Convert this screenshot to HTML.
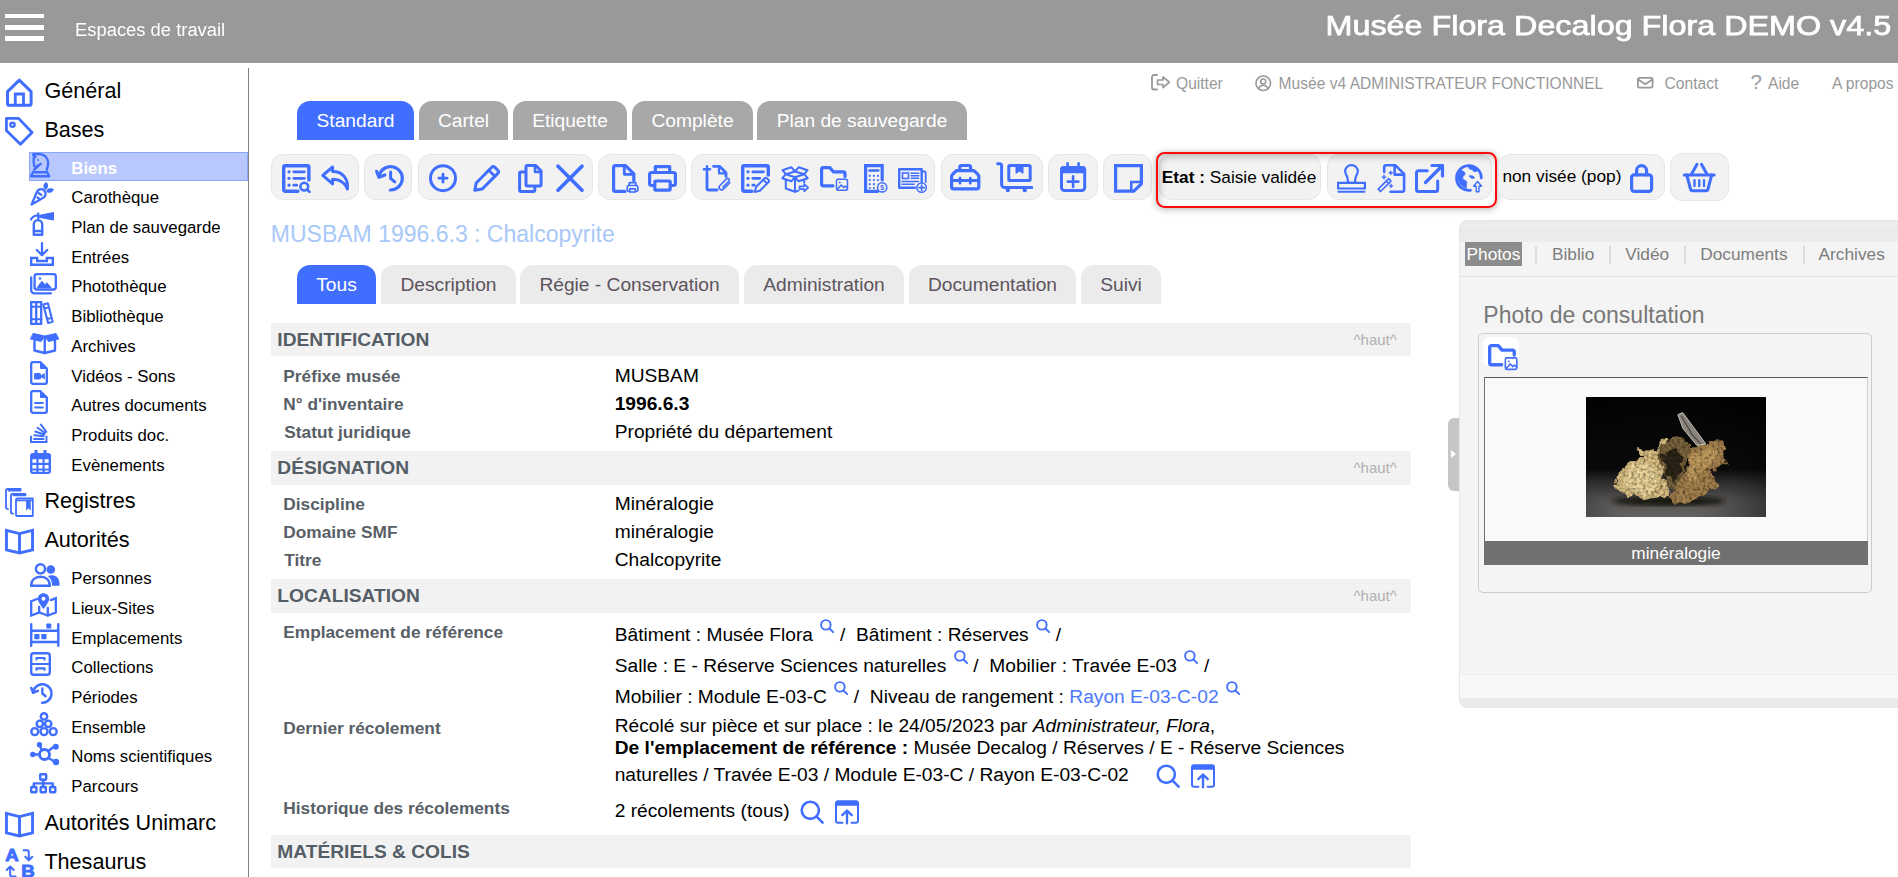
<!DOCTYPE html>
<html lang="fr"><head><meta charset="utf-8"><title>Musée Flora</title>
<style>
html,body{margin:0;padding:0;background:#fff}
body{width:1898px;height:877px;overflow:hidden;position:relative;font-family:"Liberation Sans",sans-serif;color:#000}
.t{position:absolute;white-space:nowrap;line-height:1}
.b{position:absolute}
.i{position:absolute;color:#406eff;overflow:visible}
.tab{position:absolute;border-radius:13px 13px 0 0;font-size:19.2px;text-align:center;line-height:39px;white-space:nowrap}
.tab span{position:relative;top:-0.5px}
.sm{width:14px;height:14px;color:#406eff;position:relative;top:-8.500px;margin:0 5.600px 0 2px;overflow:visible}
</style></head>
<body>
<header>
<div class="b" style="left:0px;top:0px;width:1898px;height:62.5px;background:#999"></div>
<div class="b" style="left:4.5px;top:13.7px;width:39px;height:4.5px;background:#fff"></div>
<div class="b" style="left:4.5px;top:25px;width:39px;height:4.5px;background:#fff"></div>
<div class="b" style="left:4.5px;top:36.2px;width:39px;height:4.5px;background:#fff"></div>
<span class="t " style="left:74.5px;top:19px;font-size:19.2px;line-height:21px;color:#fff;transform:scaleX(0.958);transform-origin:0 50%;">Espaces de travail</span>
<span class="t " style="right:7.2px;top:10px;font-size:28px;line-height:31px;color:#fff;-webkit-text-stroke:0.75px #fff;transform:scaleX(1.154);transform-origin:100% 50%;">Musée Flora Decalog Flora DEMO v4.5</span>
</header>
<nav>
<div class="b" style="left:248px;top:68px;width:1px;height:809px;background:#808080"></div>
<svg class="i" style="left:6px;top:78px;width:26.60px;height:28.80px;" viewBox="0 0 26.6 28.8"><g fill="none" stroke="currentColor" stroke-width="3" stroke-linecap="round" stroke-linejoin="round"><path d="M1.500 13.600 13.300 2.200l11.800 11.400v12.200a1.500 1.500 0 0 1-1.500 1.500H3a1.500 1.500 0 0 1-1.500-1.500z" /><path d="M9.300 27V16h8.200v11" stroke-width="2.800" stroke-linejoin="miter"/></g></svg>
<span class="t " style="left:44.4px;top:78px;font-size:21.6px;line-height:25px;">Général</span>
<svg class="i" style="left:4.9px;top:116.8px;width:29.10px;height:29.20px;" viewBox="0 0 29.1 29.2"><g fill="none" stroke="currentColor" stroke-width="2.8" stroke-linecap="round" stroke-linejoin="round"><path d="M1.400 1.400h12.200l13.500 14.100-11.700 11.700L1.400 13.600z" stroke-linejoin="round"/><circle cx="7.500" cy="7.700" r="2.100" stroke-width="2.400"/></g></svg>
<span class="t " style="left:44.4px;top:117px;font-size:21.6px;line-height:25px;">Bases</span>
<svg class="i" style="left:5.3px;top:488px;width:28.80px;height:29.00px;" viewBox="0 0 28.8 29"><g fill="none" stroke="currentColor" stroke-width="1.8" stroke-linecap="round" stroke-linejoin="round"><path d="M1 19.500V2.600A1.600 1.600 0 0 1 2.600 1h13v1.500H3.500M1 19.500c0 1 .8 1.700 2 1.700" /><path d="M6 24V7.400a1.600 1.600 0 0 1 1.600-1.600h12.800v1.500H8.500M6 24c0 1 .8 1.700 2 1.700"/><path d="M11 27V11.800a1.500 1.500 0 0 1 1.500-1.500h15.300v17.700H12.200A1.200 1.200 0 0 1 11 27z"/><path d="M11.500 12.300h16"/><path d="M21.500 12.500v9.300l1.900-1.700 1.900 1.700v-9.300z" fill="currentColor" stroke-width=".8"/></g></svg>
<span class="t " style="left:44.4px;top:488px;font-size:21.6px;line-height:25px;">Registres</span>
<svg class="i" style="left:5px;top:528px;width:29.00px;height:26.40px;" viewBox="0 0 29 26.4"><g fill="none" stroke="currentColor" stroke-width="2.9" stroke-linecap="round" stroke-linejoin="miter"><path d="M1.450 2.300 14.500 5.600l13.050-3.300V21.800L14.500 25 1.450 21.800zM14.500 5.600V25"/></g></svg>
<span class="t " style="left:44.4px;top:527px;font-size:21.6px;line-height:25px;">Autorités</span>
<svg class="i" style="left:5px;top:811px;width:29.00px;height:26.40px;" viewBox="0 0 29 26.4"><g fill="none" stroke="currentColor" stroke-width="2.9" stroke-linecap="round" stroke-linejoin="miter"><path d="M1.450 2.300 14.500 5.600l13.050-3.300V21.800L14.500 25 1.450 21.800zM14.500 5.600V25"/></g></svg>
<span class="t " style="left:44.4px;top:810px;font-size:21.6px;line-height:25px;">Autorités Unimarc</span>
<svg class="i" style="left:5px;top:848px;width:29.00px;height:29.00px;" viewBox="0 0 29 29"><text transform="scale(1.1 1)" x="0.200" y="12.800" font-family="Liberation Sans, sans-serif" font-weight="bold" font-size="17" fill="currentColor" stroke="currentColor" stroke-width=".9">A</text><text transform="scale(1.1 1)" x="14.800" y="29.500" font-family="Liberation Sans, sans-serif" font-weight="bold" font-size="17" fill="currentColor" stroke="currentColor" stroke-width=".9">B</text><g fill="none" stroke="currentColor" stroke-width="2" stroke-linecap="round" stroke-linejoin="round"><path d="M18.500 2.300h3.300a2 2 0 0 1 2 2v7.500M20.300 8.800l3.500 3.500 3.500-3.500"/><path d="M10.500 28.500H7.200a2 2 0 0 1-2-2V19M1.700 22l3.500-3.500L8.700 22"/></g></svg>
<span class="t " style="left:44.4px;top:849px;font-size:21.6px;line-height:25px;">Thesaurus</span>
<div class="b" style="left:29px;top:152px;width:219px;height:28.6px;background:#b8c8fc;border:1px solid #8aa5fc;box-sizing:border-box"></div>
<svg class="i" style="left:30.2px;top:152.2px;width:20.80px;height:26.00px;" viewBox="0 0 20 25"><g fill="none" stroke="currentColor" stroke-width="2.3" stroke-linecap="round" stroke-linejoin="round"><path d="M3.500 2h5.500c5 0 8.500 4 8.500 8.500 0 2.500-.9 4.200-1.300 6.500"/><path d="M3 2.500c.8.800 1.600 1.500 2.300 2.300M4 3c-.8 3.500-.7 7 0 10.500l1.500 1 4.800-3M4 17l6.300-5.500"/><circle cx="7.800" cy="7.700" r=".9" fill="currentColor" stroke="none"/><path d="M2.800 19.500h13.800l1.800 3.800H1z"/></g></svg>
<span class="t " style="left:71.3px;top:159px;font-size:16.8px;line-height:19px;color:#fff;font-weight:bold;">Biens</span>
<svg class="i" style="left:30.2px;top:181.7px;width:24.00px;height:24.00px;" viewBox="0 0 24 24"><g fill="none" stroke="currentColor" stroke-width="2.3" stroke-linecap="round" stroke-linejoin="round"><path d="M1.600 22.400 7 9.800c1.200-2.500 4-3.300 6.300-2 2.300 1.400 3 4.200 1.500 6.500-.8 1.200-2 1.900-3.300 2.500z"/><path d="M8.800 11.200l2.500 1.700M7.500 15.500l1.700 1.200"/><path d="M14.800 6.500c-1-2.200-.2-4.500 1.500-5.500 1.300 1.700 1.200 4-.3 5.800M17.200 8.800c1.200-1.700 3.800-2.300 5.800-1.300-.8 2-3.200 3-5.300 2.300" fill="currentColor" stroke-width="1.600"/></g></svg>
<span class="t " style="left:71.3px;top:188px;font-size:16.8px;line-height:19px;">Carothèque</span>
<svg class="i" style="left:30.2px;top:211.8px;width:24.00px;height:24.00px;" viewBox="0 0 24 24"><g fill="none" stroke="currentColor" stroke-width="2.4" stroke-linecap="round" stroke-linejoin="round"><path d="M3.800 22.800V12.300a4.200 4.200 0 0 1 8.400 0v10.500z"/><path d="M4 19h8"/><path d="M8.200 8V1.200" stroke-width="2"/><path d="M1 7.500c1-2.500 3.500-4 7-4.200" stroke-width="2.200"/><path d="M8.500 3.500 23.500.500v7.500L8.500 5.200z" fill="currentColor" stroke-width="1"/></g></svg>
<span class="t " style="left:71.3px;top:218px;font-size:16.8px;line-height:19px;">Plan de sauvegarde</span>
<svg class="i" style="left:30.2px;top:242.1px;width:24.00px;height:24.00px;" viewBox="0 0 24 24"><g fill="none" stroke="currentColor" stroke-width="2.4" stroke-linecap="round" stroke-linejoin="round"><path d="M12 1.200v11.500M6.800 8 12 13.200 17.200 8" stroke-width="2.300"/><path d="M1.200 16h6v3h9.600v-3h6v6.700H1.200z" stroke-linejoin="miter"/></g></svg>
<span class="t " style="left:71.3px;top:248px;font-size:16.8px;line-height:19px;">Entrées</span>
<svg class="i" style="left:30.2px;top:272.7px;width:27.00px;height:21.50px;" viewBox="0 0 27 21.5"><g fill="none" stroke="currentColor" stroke-width="2.3" stroke-linecap="round" stroke-linejoin="round"><rect x="4.600" y="1.200" width="21.200" height="15.300" rx="2.300"/><path d="M1.200 4.500v12.800a3 3 0 0 0 3 3H21"/><circle cx="10" cy="5.500" r="1.300" fill="currentColor" stroke="none"/><path d="M7.500 14.200l4.500-6 3 3.800 1.800-2.200 4 4.400z" fill="currentColor" stroke-width="1"/></g></svg>
<span class="t " style="left:71.3px;top:277px;font-size:16.8px;line-height:19px;">Photothèque</span>
<svg class="i" style="left:30.2px;top:301.1px;width:24.00px;height:24.00px;" viewBox="0 0 24 24"><g fill="none" stroke="currentColor" stroke-width="2.3" stroke-linecap="round" stroke-linejoin="round"><path d="M1.200 1.200h5v21.600h-5zM6.200 1.200h5v21.600h-5z" stroke-linejoin="miter"/><path d="M1.200 5.800h10M1.200 18.200h10" stroke-width="2"/><path d="M13.300 3.500l4.600-1.300 4.800 18.500-4.600 1.300zM14.300 7.500l4.600-1.300M17 18l4.600-1.300" stroke-width="2.100"/></g></svg>
<span class="t " style="left:71.3px;top:307px;font-size:16.8px;line-height:19px;">Bibliothèque</span>
<svg class="i" style="left:30.2px;top:332px;width:29.50px;height:22.00px;" viewBox="0 0 29.5 22"><g fill="none" stroke="currentColor" stroke-width="2.4" stroke-linecap="round" stroke-linejoin="round"><path d="M4.500 9v9.500l10.250 2.500 10.250-2.500V9"/><path d="M14.750 6v15"/><path d="M3.500 1.500 14.750 4 26 1.500l2.800 5.500-10.300 2.500-3.750-5-3.750 5L.7 7z" fill="currentColor" stroke-width="1"/></g></svg>
<span class="t " style="left:71.3px;top:337px;font-size:16.8px;line-height:19px;">Archives</span>
<svg class="i" style="left:30.2px;top:360.8px;width:18.00px;height:24.00px;" viewBox="0 0 18 24"><g fill="none" stroke="currentColor" stroke-width="2.3" stroke-linecap="round" stroke-linejoin="round"><path d="M3 1.200h7.500l6.300 6.300V21a1.800 1.800 0 0 1-1.800 1.800H3A1.800 1.800 0 0 1 1.200 21V3A1.800 1.800 0 0 1 3 1.200z"/><path d="M10.500 1.500v6h6" fill="currentColor" stroke-width="1"/><rect x="4" y="12" width="7" height="6.500" rx="1.500" fill="currentColor" stroke="none"/><path d="M11 14.500l3.500-2v5.500l-3.500-2z" fill="currentColor" stroke-width=".5"/></g></svg>
<span class="t " style="left:71.3px;top:367px;font-size:16.8px;line-height:19px;">Vidéos - Sons</span>
<svg class="i" style="left:30.2px;top:390.4px;width:18.00px;height:24.00px;" viewBox="0 0 18 24"><g fill="none" stroke="currentColor" stroke-width="2.3" stroke-linecap="round" stroke-linejoin="round"><path d="M3 1.200h7.500l6.300 6.300V21a1.800 1.800 0 0 1-1.800 1.800H3A1.800 1.800 0 0 1 1.200 21V3A1.800 1.800 0 0 1 3 1.200z"/><path d="M10.500 1.500v6h6" fill="currentColor" stroke-width="1"/><path d="M5.200 13h7.600M5.200 17.500h7.600" stroke-width="2.200"/></g></svg>
<span class="t " style="left:71.3px;top:396px;font-size:16.8px;line-height:19px;">Autres documents</span>
<svg class="i" style="left:30.2px;top:421.70000000000005px;width:17.50px;height:21.00px;" viewBox="0 0 17.5 21"><g fill="none" stroke="currentColor" stroke-width="1.9" stroke-linecap="round" stroke-linejoin="round"><path d="M1 14.500V20h15.500v-5.500" stroke-linejoin="miter"/><path d="M4 17h9.500M4.300 13.300l9.300 1M5.300 9.500l8.800 3M7.500 5.800l7.500 5.200M10.800 2.500l5.500 7.300" stroke-width="2"/></g></svg>
<span class="t " style="left:71.3px;top:426px;font-size:16.8px;line-height:19px;">Produits doc.</span>
<svg class="i" style="left:30.2px;top:450.1px;width:21.00px;height:24.00px;" viewBox="0 0 21 24"><path fill="currentColor" d="M4.500 0h3v3h6V0h3v3H18a3 3 0 0 1 3 3v15a3 3 0 0 1-3 3H3a3 3 0 0 1-3-3V6a3 3 0 0 1 3-3h1.500z"/><g fill="#fff"><rect x="2.400" y="9.200" width="4" height="3.600"/><rect x="8.500" y="9.200" width="4" height="3.600"/><rect x="14.600" y="9.200" width="4" height="3.600"/><rect x="2.400" y="15" width="4" height="3.600"/><rect x="8.500" y="15" width="4" height="3.600"/><rect x="14.600" y="15" width="4" height="3.600"/><rect x="2.400" y="20.500" width="4" height="1.300"/><rect x="8.500" y="20.500" width="4" height="1.300"/><rect x="14.600" y="20.500" width="4" height="1.300"/></g></svg>
<span class="t " style="left:71.3px;top:456px;font-size:16.8px;line-height:19px;">Evènements</span>
<svg class="i" style="left:30.2px;top:563.3px;width:29.50px;height:24.00px;" viewBox="0 0 29.5 24"><g fill="none" stroke="currentColor" stroke-width="2.4" stroke-linecap="round" stroke-linejoin="round"><circle cx="10.500" cy="5.800" r="4.600"/><path d="M1.200 22.700c0-5.500 3.800-9 9.300-9s9.300 3.500 9.300 9z" stroke-linejoin="miter"/><circle cx="20.800" cy="6.500" r="4.300" fill="currentColor" stroke="none"/><path d="M19.500 12.600c1-.3 1.700-.4 2.700-.4 4.300 0 7.300 3.500 7.300 8.500v2h-7.400c0-4-1-7.300-4-9.300.4-.4.900-.6 1.400-.8z" fill="currentColor" stroke="none"/></g></svg>
<span class="t " style="left:71.3px;top:569px;font-size:16.8px;line-height:19px;">Personnes</span>
<svg class="i" style="left:30.2px;top:593px;width:27.00px;height:24.00px;" viewBox="0 0 27 24"><g fill="none" stroke="currentColor" stroke-width="2.3" stroke-linecap="round" stroke-linejoin="round"><path d="M7 6 1.200 8.200v14.300l8-3 8.600 3 8-3V5.200l-5 1.900" stroke-linejoin="miter"/><path d="M9.200 14v5.500M17.800 15v7.500"/><path d="M13.500.3c-3.300 0-5.700 2.400-5.700 5.500 0 3.700 5.700 10.200 5.700 10.200s5.700-6.500 5.700-10.200c0-3.100-2.400-5.500-5.700-5.500z" fill="currentColor" stroke="none"/><circle cx="13.500" cy="5.800" r="2" fill="#fff" stroke="none"/></g></svg>
<span class="t " style="left:71.3px;top:599px;font-size:16.8px;line-height:19px;">Lieux-Sites</span>
<svg class="i" style="left:30.2px;top:623px;width:29.50px;height:24.00px;" viewBox="0 0 29.5 24"><g fill="none" stroke="currentColor" stroke-width="2.4" stroke-linecap="round" stroke-linejoin="round"><path d="M1.200 1.200v21.600M28.300 1.200v21.600M1.200 7.800h27M1.200 19h27" stroke-width="2.400"/><rect x="16.300" y="0.500" width="5" height="5" rx=".8" fill="currentColor" stroke="none"/><rect x="4.300" y="11" width="5.200" height="5.200" rx=".8" fill="currentColor" stroke="none"/><rect x="11.300" y="11" width="5.200" height="5.200" rx=".8" fill="currentColor" stroke="none"/></g></svg>
<span class="t " style="left:71.3px;top:629px;font-size:16.8px;line-height:19px;">Emplacements</span>
<svg class="i" style="left:30.2px;top:652.3px;width:21.00px;height:24.00px;" viewBox="0 0 21 24"><g fill="none" stroke="currentColor" stroke-width="2.4" stroke-linecap="round" stroke-linejoin="round"><rect x="1.200" y="1.200" width="18.600" height="21.600" rx="2.500"/><path d="M1.200 12h18.600M6.500 7.500V6h8v1.500M6.500 17.800v-1.500h8v1.500" stroke-width="2.200"/></g></svg>
<span class="t " style="left:71.3px;top:658px;font-size:16.8px;line-height:19px;">Collections</span>
<svg class="i" style="left:30.2px;top:682.6px;width:22.91px;height:21.33px;" viewBox="0 0 29 27"><g fill="none" stroke="currentColor" stroke-width="3.2" stroke-linecap="round" stroke-linejoin="round"><path d="M15.300 25A11.700 11.700 0 1 0 4.600 9.300"/><path d="M1.600 6.300l2.300 6 6-2.300"/><path d="M15.600 7v6.300l4.200 3.500" stroke-width="3"/></g></svg>
<span class="t " style="left:71.3px;top:688px;font-size:16.8px;line-height:19px;">Périodes</span>
<svg class="i" style="left:30.2px;top:712px;width:28.00px;height:24.50px;" viewBox="0 0 28 24.5"><g fill="none" stroke="currentColor" stroke-width="2.4" stroke-linecap="round" stroke-linejoin="round"><circle cx="14" cy="4.400" r="3.200"/><circle cx="9.800" cy="11.800" r="3.200"/><circle cx="18.200" cy="11.800" r="3.200"/><circle cx="4.800" cy="19.600" r="3.500"/><circle cx="14" cy="19.600" r="3.500"/><circle cx="23.200" cy="19.600" r="3.500"/></g></svg>
<span class="t " style="left:71.3px;top:718px;font-size:16.8px;line-height:19px;">Ensemble</span>
<svg class="i" style="left:30.2px;top:741.6999999999999px;width:29.50px;height:23.50px;" viewBox="0 0 29.5 23.5"><g fill="none" stroke="currentColor" stroke-width="2.8" stroke-linecap="round" stroke-linejoin="round"><circle cx="14.500" cy="12.500" r="5"/><path d="M11.800 8.200 9.800 3.500M18.300 9l5.500-4.300M18.500 16l5.500 3.300M9.500 12.500H3" stroke-width="2.400"/><circle cx="9.500" cy="2.800" r="2.700" fill="currentColor" stroke="none"/><circle cx="25.800" cy="4.800" r="3" fill="currentColor" stroke="none"/><circle cx="26" cy="20" r="3.200" fill="currentColor" stroke="none"/><circle cx="2.800" cy="12.500" r="2.700" fill="currentColor" stroke="none"/></g></svg>
<span class="t " style="left:71.3px;top:747px;font-size:16.8px;line-height:19px;">Noms scientifiques</span>
<svg class="i" style="left:30.2px;top:773px;width:26.50px;height:20.50px;" viewBox="0 0 26.5 20.5"><g fill="none" stroke="currentColor" stroke-width="2.4" stroke-linecap="round" stroke-linejoin="round"><rect x="10.200" y="1.200" width="6" height="5.500" rx=".6"/><rect x="1.200" y="14" width="5.200" height="5.300" rx=".6"/><rect x="10.650" y="14" width="5.200" height="5.300" rx=".6"/><rect x="20.100" y="14" width="5.200" height="5.300" rx=".6"/><path d="M13.250 6.800V14M3.800 14v-3.600h18.900V14"/></g></svg>
<span class="t " style="left:71.3px;top:777px;font-size:16.8px;line-height:19px;">Parcours</span>
</nav>
<main>
<svg class="i" style="left:1151px;top:73.8px;width:19.50px;height:16.50px;color:#999;" viewBox="0 0 19.5 16.5"><g fill="none" stroke="currentColor" stroke-width="1.8" stroke-linecap="round" stroke-linejoin="round"><path d="M6 1H3A2 2 0 0 0 1 3v10.500a2 2 0 0 0 2 2h3"/><path d="M6.500 6h5.500V2.800l6.300 5.450-6.300 5.450v-3.200H6.500z" stroke-width="1.700"/></g></svg>
<span class="t " style="left:1176px;top:75px;font-size:15.6px;line-height:17px;color:#999;">Quitter</span>
<svg class="i" style="left:1255.2px;top:74.8px;width:16.50px;height:16.50px;color:#999;" viewBox="0 0 16.5 16.5"><g fill="none" stroke="currentColor" stroke-width="1.6" stroke-linecap="round" stroke-linejoin="round"><circle cx="8.250" cy="8.250" r="7.300"/><circle cx="8.250" cy="6.500" r="2.500"/><path d="M3.500 13.500c1-2.200 2.700-3.200 4.750-3.200s3.750 1 4.750 3.200"/></g></svg>
<span class="t " style="left:1278.6px;top:75px;font-size:15.6px;line-height:17px;color:#999;">Musée v4 ADMINISTRATEUR FONCTIONNEL</span>
<svg class="i" style="left:1636.6px;top:77.4px;width:16.50px;height:11.50px;color:#999;" viewBox="0 0 16.5 11.5"><g fill="none" stroke="currentColor" stroke-width="1.8" stroke-linecap="round" stroke-linejoin="round"><rect x=".9" y=".9" width="14.700" height="9.700" rx="1.500"/><path d="M1.200 2.500 8.250 7.200l7.050-4.700"/></g></svg>
<span class="t " style="left:1664.6px;top:75px;font-size:15.6px;line-height:17px;color:#999;">Contact</span>
<span class="t " style="left:1750.5px;top:70px;font-size:20.5px;line-height:23px;color:#999;">?</span>
<span class="t " style="left:1768px;top:75px;font-size:15.6px;line-height:17px;color:#999;">Aide</span>
<span class="t " style="left:1832px;top:75px;font-size:15.6px;line-height:17px;color:#999;">A propos</span>
<div class="tab" style="left:297px;top:101px;width:117px;height:39px;background:#406eff;color:#fff"><span>Standard</span></div>
<div class="tab" style="left:419px;top:101px;width:89px;height:39px;background:#a8a8a8;color:#fff"><span>Cartel</span></div>
<div class="tab" style="left:513px;top:101px;width:114px;height:39px;background:#a8a8a8;color:#fff"><span>Etiquette</span></div>
<div class="tab" style="left:632px;top:101px;width:121px;height:39px;background:#a8a8a8;color:#fff"><span>Complète</span></div>
<div class="tab" style="left:757px;top:101px;width:210px;height:39px;background:#a8a8a8;color:#fff"><span>Plan de sauvegarde</span></div>
<div class="b" style="left:271px;top:154px;width:88px;height:45.69999999999999px;background:#f2f2f2;border:1px solid #e6e6e6;border-radius:12px;box-sizing:border-box"></div>
<div class="b" style="left:364px;top:154px;width:48px;height:45.69999999999999px;background:#f2f2f2;border:1px solid #e6e6e6;border-radius:12px;box-sizing:border-box"></div>
<div class="b" style="left:418px;top:154px;width:175px;height:45.69999999999999px;background:#f2f2f2;border:1px solid #e6e6e6;border-radius:12px;box-sizing:border-box"></div>
<div class="b" style="left:598px;top:154px;width:88px;height:45.69999999999999px;background:#f2f2f2;border:1px solid #e6e6e6;border-radius:12px;box-sizing:border-box"></div>
<div class="b" style="left:691px;top:154px;width:244px;height:45.69999999999999px;background:#f2f2f2;border:1px solid #e6e6e6;border-radius:12px;box-sizing:border-box"></div>
<div class="b" style="left:941px;top:154px;width:102px;height:45.69999999999999px;background:#f2f2f2;border:1px solid #e6e6e6;border-radius:12px;box-sizing:border-box"></div>
<div class="b" style="left:1048px;top:154px;width:50px;height:45.69999999999999px;background:#f2f2f2;border:1px solid #e6e6e6;border-radius:12px;box-sizing:border-box"></div>
<div class="b" style="left:1103px;top:154px;width:49px;height:45.69999999999999px;background:#f2f2f2;border:1px solid #e6e6e6;border-radius:12px;box-sizing:border-box"></div>
<svg class="i" style="left:282.2px;top:163.9px;width:28.60px;height:29.00px;" viewBox="0 0 28.6 29"><g fill="none" stroke="currentColor" stroke-width="3.4" stroke-linecap="round" stroke-linejoin="round"><path d="M16 27.300H3.200a1.500 1.500 0 0 1-1.500-1.500V3.200a1.500 1.500 0 0 1 1.500-1.500h22.200a1.500 1.500 0 0 1 1.500 1.500V16"/><circle cx="7" cy="7.8" r="1.6" fill="currentColor" stroke="none"/><circle cx="7" cy="14.3" r="1.6" fill="currentColor" stroke="none"/><circle cx="7" cy="21.2" r="1.6" fill="currentColor" stroke="none"/><path d="M11.800 7.800h10.600M11.800 14.300h10.600M11.800 21.200h3" stroke-width="2.800"/><circle cx="22.300" cy="22.600" r="3.900" stroke-width="2.600"/><path d="M25.300 25.600l2.200 2.200" stroke-width="2.600"/></g></svg>
<svg class="i" style="left:321px;top:165px;width:29.00px;height:26.00px;" viewBox="0 0 29 26"><g fill="none" stroke="currentColor" stroke-width="3" stroke-linecap="round" stroke-linejoin="round"><path d="M11.600 2 1.800 10.400l9.800 8.400v-4.600c7 0 12 2.300 14.800 9.800 1-10.500-4.800-17.400-14.800-17.400z"/></g></svg>
<svg class="i" style="left:375px;top:165px;width:29.00px;height:27.00px;" viewBox="0 0 29 27"><g fill="none" stroke="currentColor" stroke-width="3.2" stroke-linecap="round" stroke-linejoin="round"><path d="M15.300 25A11.700 11.700 0 1 0 4.600 9.300"/><path d="M1.600 6.300l2.300 6 6-2.300"/><path d="M15.600 7v6.300l4.200 3.500" stroke-width="3"/></g></svg>
<svg class="i" style="left:428.8px;top:164px;width:28.00px;height:28.30px;" viewBox="0 0 28 28.3"><g fill="none" stroke="currentColor" stroke-width="3" stroke-linecap="round" stroke-linejoin="round"><circle cx="14" cy="14.150" r="12.500"/><path d="M14 10.100v8.100M9.950 14.150h8.100" stroke-width="2.800"/></g></svg>
<svg class="i" style="left:473px;top:164.4px;width:28.00px;height:28.00px;" viewBox="0 0 28 28"><g fill="none" stroke="currentColor" stroke-width="3" stroke-linecap="round" stroke-linejoin="round"><path d="M1.800 26.300 3.200 19 18.700 3.300a2.300 2.300 0 0 1 3.200 0l2.900 2.900a2.300 2.300 0 0 1 0 3.200L9.200 25z"/><path d="M15.800 6.200l6.300 6.300" stroke-width="2.800"/></g></svg>
<svg class="i" style="left:518.2px;top:164px;width:24.60px;height:29.00px;" viewBox="0 0 24.6 29"><g fill="none" stroke="currentColor" stroke-width="3" stroke-linecap="round" stroke-linejoin="round"><path d="M9.500 1.600h8.300l5.300 5.400v13.500a1.500 1.500 0 0 1-1.500 1.500H9.500A1.500 1.500 0 0 1 8 20.500V3.100a1.500 1.500 0 0 1 1.500-1.500z"/><path d="M17 2v6h5.800" stroke-width="2.600"/><path d="M7.500 8H3.100a1.500 1.500 0 0 0-1.500 1.500V26a1.500 1.500 0 0 0 1.500 1.500h12.200a1.500 1.500 0 0 0 1.500-1.500v-3.500"/></g></svg>
<svg class="i" style="left:556px;top:164px;width:28.00px;height:28.40px;" viewBox="0 0 28 28.4"><g fill="none" stroke="currentColor" stroke-width="3.7" stroke-linecap="round" stroke-linejoin="round"><path d="M2 2.200l24 24M26 2.200l-24 24"/></g></svg>
<svg class="i" style="left:611.7px;top:164px;width:26.60px;height:29.00px;" viewBox="0 0 26.6 29"><g fill="none" stroke="currentColor" stroke-width="3.2" stroke-linecap="round" stroke-linejoin="round"><path d="M13 27.400H3.200a1.600 1.600 0 0 1-1.600-1.600V3.200a1.600 1.600 0 0 1 1.600-1.600H13.500l8.300 8.300v6.600"/><path d="M12.300 2v8.300h9" stroke-width="2.800"/><g stroke-width="1.700"><path d="M17.300 21.500v-2.800h6.500v2.800" fill="#f2f2f2"/><rect x="15.300" y="21.500" width="10.500" height="6" rx="1.500" fill="#f2f2f2"/><rect x="17.800" y="24.800" width="5.500" height="3.200" fill="#f2f2f2"/></g></g></svg>
<svg class="i" style="left:648px;top:165px;width:29.00px;height:26.70px;" viewBox="0 0 29 26.7"><g fill="none" stroke="currentColor" stroke-width="3.2" stroke-linecap="round" stroke-linejoin="round"><path d="M7.300 7V1.600h14.400V7" /><path d="M5.800 20.500H3.600a2 2 0 0 1-2-2v-9a2 2 0 0 1 2-2h21.800a2 2 0 0 1 2 2v9a2 2 0 0 1-2 2h-2.200"/><rect x="6.800" y="16" width="15.400" height="9.100" rx="1"/></g></svg>
<svg class="i" style="left:702.5px;top:163.8px;width:28.30px;height:29.00px;" viewBox="0 0 28.3 29"><g fill="none" stroke="currentColor" stroke-width="2.8" stroke-linecap="round" stroke-linejoin="round"><path d="M14 26H5.600A1.600 1.600 0 0 1 4 24.400V10"/><path d="M.900 5.200h6.200M4 2.100v6.200" stroke-width="2.400"/><path d="M10.500 2.300h6l6.500 6.500V12.500"/><path d="M16 3v6.300h6.300" stroke-width="2.200"/><path d="M26.800 18.800l-6.300 6.300a2.500 2.500 0 0 1-3.600-3.600l6.600-6.600a1.600 1.600 0 0 1 2.300 2.300l-6 6" stroke-width="1.600"/></g></svg>
<svg class="i" style="left:741px;top:163.8px;width:29.00px;height:29.00px;" viewBox="0 0 29 29"><g fill="none" stroke="currentColor" stroke-width="3.4" stroke-linecap="round" stroke-linejoin="round"><path d="M11 27.300H3.200a1.500 1.500 0 0 1-1.500-1.500V3.200a1.500 1.500 0 0 1 1.500-1.500h22.600a1.500 1.500 0 0 1 1.500 1.500V11"/><circle cx="7" cy="7.8" r="1.6" fill="currentColor" stroke="none"/><circle cx="7" cy="14.3" r="1.6" fill="currentColor" stroke="none"/><circle cx="7" cy="21.2" r="1.6" fill="currentColor" stroke="none"/><path d="M11.800 7.800h10.600M11.800 14.300h7M11.800 21.200h1.500" stroke-width="2.800"/><path d="M13.800 28l1.200-5 8.800-8.800a1.500 1.500 0 0 1 2.100 0l1.700 1.700a1.500 1.500 0 0 1 0 2.100L18.800 26.800zM22.300 15.800l3.800 3.800" stroke-width="2"/></g></svg>
<svg class="i" style="left:781px;top:165.5px;width:28.30px;height:27.00px;" viewBox="0 0 28.3 27"><g fill="none" stroke="currentColor" stroke-width="2" stroke-linecap="round" stroke-linejoin="round"><path d="M4.800 14v8.500l9.200 3.300 3.500-1.200"/><path d="M23.200 14v2.500M14 11.500v14.300"/><path d="M4.800 8.200 14 5.500l9.200 2.700L14 11.300zM4.800 8.200 1.300 12.200l9.100 3L14 11.300l3.600 3.900 9.100-3-3.500-4M4.800 8.200 1.500 4.200l8.700-3L14 5.500l3.800-4.300 8.700 3-3.300 4"/><path d="M18.500 20.300h4.700v-2.200l4 3.600-4 3.600v-2.200h-4.700z" stroke-width="1.700"/></g></svg>
<svg class="i" style="left:819.7px;top:165.8px;width:28.30px;height:25.00px;" viewBox="0 0 28.3 25"><g fill="none" stroke="currentColor" stroke-width="3.2" stroke-linecap="round" stroke-linejoin="round"><path d="M13 19.800H3.400a1.800 1.800 0 0 1-1.800-1.800V3.400a1.800 1.800 0 0 1 1.800-1.800h6.400l3.500 4.200h9.900a1.800 1.800 0 0 1 1.800 1.800V10.500"/><g stroke-width="1.500"><rect x="16.500" y="13.200" width="11" height="11" rx="1.500" fill="#f2f2f2"/><circle cx="19.8" cy="16.5" r="0.9" fill="currentColor" stroke="none"/><path d="M17.200 23.300l4-4.300 2.500 2.500 1.500-1.500 2 2"/></g></g></svg>
<svg class="i" style="left:863.9px;top:163.8px;width:23.70px;height:29.00px;" viewBox="0 0 23.7 29"><g fill="none" stroke="currentColor" stroke-width="3.2" stroke-linecap="round" stroke-linejoin="round"><path d="M13.500 27.400H1.600V1.600h16.600V16" stroke-linejoin="miter"/><path d="M5.500 6.500h8.800" stroke-width="2.600"/><circle cx="5.8" cy="11.8" r="1.1" fill="currentColor" stroke="none"/><circle cx="5.8" cy="16" r="1.1" fill="currentColor" stroke="none"/><circle cx="5.8" cy="20.2" r="1.1" fill="currentColor" stroke="none"/><circle cx="9.9" cy="11.8" r="1.1" fill="currentColor" stroke="none"/><circle cx="9.9" cy="16" r="1.1" fill="currentColor" stroke="none"/><circle cx="9.9" cy="20.2" r="1.1" fill="currentColor" stroke="none"/><circle cx="14" cy="11.8" r="1.1" fill="currentColor" stroke="none"/><circle cx="14" cy="16" r="1.1" fill="currentColor" stroke="none"/><circle cx="5.8" cy="24" r="1.1" fill="currentColor" stroke="none"/><circle cx="9.9" cy="24" r="1.1" fill="currentColor" stroke="none"/><circle cx="18.200" cy="23.400" r="4.600" stroke-width="1.500" fill="#f2f2f2"/><text x="18.200" y="26" text-anchor="middle" font-size="7" font-weight="bold" font-family="Liberation Sans, sans-serif" fill="currentColor" stroke="none">$</text></g></svg>
<svg class="i" style="left:897.8px;top:167.8px;width:29.20px;height:25.00px;" viewBox="0 0 29.2 25"><g fill="none" stroke="currentColor" stroke-width="2.4" stroke-linecap="round" stroke-linejoin="round"><path d="M17 19.800H1.200V1.200h22.500V14"/><path d="M23.700 3.500h2.500a1.500 1.500 0 0 1 1.500 1.500v9" stroke-width="1.800"/><rect x="4.500" y="5" width="6" height="5.500" stroke-width="1.600" stroke-linejoin="miter"/><path d="M13.200 5.300h7.500M13.200 7.800h7.500M13.200 10.300h7.500M4 13.500h16.500M4 16.300h12" stroke-width="1.500"/><circle cx="23.600" cy="19.600" r="4.700" stroke-width="1.500" fill="#f2f2f2"/><path d="M23.600 17v5.200M21 19.600h5.200" stroke-width="1.700"/></g></svg>
<svg class="i" style="left:950.2px;top:163.6px;width:30.40px;height:26.50px;" viewBox="0 0 30.4 26.5"><g fill="none" stroke="currentColor" stroke-width="3.2" stroke-linecap="round" stroke-linejoin="round"><path d="M9.800 6.500V3.200a1.700 1.700 0 0 1 1.700-1.700h7.400a1.700 1.700 0 0 1 1.700 1.700V6.500"/><path d="M1.600 12.500c0-1 .3-1.500 1-2.200L5.300 7.600c.7-.7 1.200-1 2.200-1h15.400c1 0 1.500.3 2.200 1l2.700 2.700c.7.700 1 1.200 1 2.200V23a1.900 1.900 0 0 1-1.900 1.900H3.500A1.900 1.900 0 0 1 1.600 23z"/><path d="M1.600 16.500h27.200M10 14.200v5M20.300 14.200v5" stroke-width="2.800"/></g></svg>
<svg class="i" style="left:996px;top:161.8px;width:37.40px;height:30.00px;" viewBox="0 0 37.4 30"><g fill="none" stroke="currentColor" stroke-width="3" stroke-linecap="round" stroke-linejoin="round"><path d="M1.600 1.800h2a2 2 0 0 1 2 2v18.700a3 3 0 0 0 3 3h27.200" /><rect x="12.800" y="3.500" width="21.400" height="15" rx="1"/><path d="M20 3.500v7.800l3.500-2.200 3.500 2.200V3.500z" fill="currentColor" stroke-width="1"/><circle cx="11.800" cy="28" r="2.200" fill="currentColor" stroke="none"/><circle cx="28.800" cy="28" r="2.200" fill="currentColor" stroke="none"/></g></svg>
<svg class="i" style="left:1060px;top:161.8px;width:26.20px;height:30.00px;" viewBox="0 0 26.2 30"><path fill="currentColor" d="M6.300 1.200a1.300 1.300 0 0 1 2.600 0V4.100h8.400V1.200a1.300 1.300 0 0 1 2.600 0V4.100h2.800a3.500 3.500 0 0 1 3.500 3.500v3.600H0V7.600a3.500 3.500 0 0 1 3.500-3.500h2.800z"/><g fill="none" stroke="currentColor" stroke-width="3" stroke-linecap="round"><path d="M1.500 10.500v15a3 3 0 0 0 3 3h17.200a3 3 0 0 0 3-3v-15"/><path d="M13.100 14.300v10.600M7.800 19.600h10.600" stroke-width="2.600"/></g></svg>
<svg class="i" style="left:1114px;top:164px;width:29.00px;height:28.70px;" viewBox="0 0 29 28.7"><g fill="none" stroke="currentColor" stroke-width="3.2" stroke-linecap="round" stroke-linejoin="round"><path d="M1.600 1.600h25.800v18.200l-7.600 7.300H1.600z" stroke-linejoin="miter"/><path d="M27.400 18H17.300v9.100" stroke-width="2.600" stroke-linejoin="miter"/></g></svg>
<div class="b" style="left:1158.6px;top:154.4px;width:162.4000000000001px;height:45.19999999999999px;background:#f2f2f2;border:1px solid #e6e6e6;border-radius:12px;box-sizing:border-box"></div>
<span class="t " style="left:1161.8px;top:167px;font-size:17.28px;line-height:20px;"><b>Etat :</b> Saisie validée</span>
<div class="b" style="left:1326.5px;top:154.4px;width:165.0px;height:45.19999999999999px;background:#f2f2f2;border:1px solid #e6e6e6;border-radius:12px;box-sizing:border-box"></div>
<svg class="i" style="left:1336.8px;top:164px;width:29.00px;height:29.00px;" viewBox="0 0 29 29"><g fill="none" stroke="currentColor" stroke-width="2.2" stroke-linecap="round" stroke-linejoin="round"><path d="M14.500 1.200c-3.700 0-6.300 2.700-6.300 6 0 3 2.600 5 2.600 8.800v2.800h7.400V16c0-3.800 2.600-5.800 2.600-8.800 0-3.300-2.600-6-6.300-6z"/><path d="M1.100 24.500v-5.700h26.800v5.700z" stroke-linejoin="miter"/><path d="M1.500 27.700h26" stroke-width="2"/></g></svg>
<svg class="i" style="left:1376px;top:164px;width:29.40px;height:29.00px;" viewBox="0 0 29.4 29"><g fill="none" stroke="currentColor" stroke-width="2.6" stroke-linecap="round" stroke-linejoin="round"><path d="M8.200 8V3.300a2 2 0 0 1 2-2h9.300l8.600 8.600v15.900a2 2 0 0 1-2 2H14.500"/><path d="M18.600 1.800v8.800h9"/><path d="M2.200 25.200 12.700 14.700l2.300 2.300L4.500 27.500z" stroke-width="1.700"/><path d="M10.300 17.100l2.300 2.300" stroke-width="1.500"/><path d="M8 11.200v3.800M6.100 13.100h3.800M14.700 7.200v3.200M13.100 8.800h3.200M15 20.300v3.200M13.400 21.900h3.200" stroke-width="1.400"/></g></svg>
<svg class="i" style="left:1415px;top:164px;width:29.00px;height:29.00px;" viewBox="0 0 29 29"><g fill="none" stroke="currentColor" stroke-width="3" stroke-linecap="round" stroke-linejoin="round"><path d="M22.700 17v8.500a2 2 0 0 1-2 2H3.500a2 2 0 0 1-2-2V8.800a2 2 0 0 1 2-2h8.800"/><path d="M17 1.500h10.500V12M27.500 1.500 10.500 18.500" stroke-width="3.200"/></g></svg>
<svg class="i" style="left:1455px;top:164.4px;width:28.00px;height:28.60px;" viewBox="0 0 28 28.6"><g fill="none" stroke="currentColor" stroke-width="2.8" stroke-linecap="round" stroke-linejoin="round"><path d="M26.300 14A12.400 12.400 0 1 0 15.500 26.300"/><path d="M5.500 5.500c.5 1.800 3.800 1.200 4.500 3.500.6 2.300-2.800 2.800-2.300 5.200.5 2.200 3.500 1.700 4 4 .4 2-1 3.500-.2 5.800-4-1-7.500-4-8.500-8.500-.8-4 .5-7.500 2.500-10zM14 1.800c-1.300 2 .3 3.600 2.200 3.600 1.800 0 1.700 2.300 4 2.300 2 0 2-1.500 3.300-2-2.200-2.600-5.500-4.200-9.500-3.900zM14.500 12c2-.8 4.500 0 5 2-1.500.8-4.500.5-5-2z" fill="currentColor" stroke-width=".8"/><path d="M21.200 27.800v-5.500h-2.600l4-4.800 4 4.800H24v5.500z" stroke-width="1.400" fill="#f2f2f2"/></g></svg>
<div class="b" style="left:1156.4px;top:152px;width:340.4px;height:56px;border:2.4px solid #ff0a0a;border-radius:8.5px;box-sizing:border-box;box-shadow:0 1px 7px rgba(0,0,0,.32), inset 2px 3px 7px rgba(0,0,0,.22)"></div>
<div class="b" style="left:1497.6px;top:154px;width:167.4000000000001px;height:45.69999999999999px;background:#f2f2f2;border:1px solid #e6e6e6;border-radius:12px;box-sizing:border-box"></div>
<span class="t " style="left:1502.4px;top:166px;font-size:17.28px;line-height:20px;">non visée (pop)</span>
<svg class="i" style="left:1630px;top:163.8px;width:23.20px;height:29.00px;" viewBox="0 0 23.2 29"><g fill="none" stroke="currentColor" stroke-width="3.2" stroke-linecap="round" stroke-linejoin="round"><rect x="1.600" y="10.800" width="20" height="16.600" rx="2.600"/><path d="M6.600 10.800V6.600a5 5 0 0 1 10 0v4.200"/></g></svg>
<div class="b" style="left:1670.2px;top:153px;width:58.59999999999991px;height:47.69999999999999px;background:#f2f2f2;border:1px solid #e6e6e6;border-radius:12px;box-sizing:border-box"></div>
<svg class="i" style="left:1683.4px;top:162.5px;width:32.50px;height:29.30px;" viewBox="0 0 32.5 29.3"><g fill="none" stroke="currentColor" stroke-width="3" stroke-linecap="round" stroke-linejoin="round"><path d="M1.300 11.900h29.900"/><path d="M3.800 12 7.500 26a2 2 0 0 0 2 1.700h13.500a2 2 0 0 0 2-1.700L28.700 12" /><path d="M8.600 11 14 1.300M23.900 11 18.500 1.300"/><path d="M11.500 17.300v5.700M16.250 17.300v5.700M21 17.300v5.700" stroke-width="2.400"/></g></svg>
<span class="t " style="left:270.8px;top:221px;font-size:23px;line-height:26px;color:#a8c8f8;">MUSBAM 1996.6.3 : Chalcopyrite</span>
<div class="tab" style="left:297px;top:265px;width:79px;height:39px;background:#406eff;color:#fff"><span>Tous</span></div>
<div class="tab" style="left:381px;top:265px;width:135px;height:39px;background:#ebebeb;color:#5c545c"><span>Description</span></div>
<div class="tab" style="left:520px;top:265px;width:219px;height:39px;background:#ebebeb;color:#5c545c"><span>Régie - Conservation</span></div>
<div class="tab" style="left:744px;top:265px;width:160px;height:39px;background:#ebebeb;color:#5c545c"><span>Administration</span></div>
<div class="tab" style="left:909px;top:265px;width:167px;height:39px;background:#ebebeb;color:#5c545c"><span>Documentation</span></div>
<div class="tab" style="left:1081px;top:265px;width:80px;height:39px;background:#ebebeb;color:#5c545c"><span>Suivi</span></div>
<div class="b" style="left:271px;top:323.3px;width:1140px;height:32.39999999999998px;background:#f2f2f2"></div>
<span class="t " style="left:277.3px;top:329px;font-size:19.2px;line-height:21px;color:#555e66;font-weight:bold;">IDENTIFICATION</span>
<span class="t " style="right:501.20000000000005px;top:331px;font-size:15px;line-height:17px;color:#b0b0b0;">^haut^</span>
<span class="t " style="left:283.3px;top:366px;font-size:17.28px;line-height:20px;color:#586066;font-weight:bold;">Préfixe musée</span>
<span class="t " style="left:614.7px;top:365px;font-size:19.2px;line-height:21px;">MUSBAM</span>
<span class="t " style="left:283.3px;top:394px;font-size:17.28px;line-height:20px;color:#586066;font-weight:bold;">N° d&#x27;inventaire</span>
<span class="t " style="left:614.7px;top:393px;font-size:19.2px;line-height:21px;font-weight:bold;">1996.6.3</span>
<span class="t " style="left:284.3px;top:422px;font-size:17.28px;line-height:20px;color:#586066;font-weight:bold;">Statut juridique</span>
<span class="t " style="left:614.7px;top:421px;font-size:19.2px;line-height:21px;">Propriété du département</span>
<div class="b" style="left:271px;top:451.2px;width:1140px;height:33.80000000000001px;background:#f2f2f2"></div>
<span class="t " style="left:277.3px;top:457px;font-size:19.2px;line-height:21px;color:#555e66;font-weight:bold;">DÉSIGNATION</span>
<span class="t " style="right:501.20000000000005px;top:459px;font-size:15px;line-height:17px;color:#b0b0b0;">^haut^</span>
<span class="t " style="left:283.3px;top:494px;font-size:17.28px;line-height:20px;color:#586066;font-weight:bold;">Discipline</span>
<span class="t " style="left:614.7px;top:493px;font-size:19.2px;line-height:21px;">Minéralogie</span>
<span class="t " style="left:283.3px;top:522px;font-size:17.28px;line-height:20px;color:#586066;font-weight:bold;">Domaine SMF</span>
<span class="t " style="left:614.7px;top:521px;font-size:19.2px;line-height:21px;">minéralogie</span>
<span class="t " style="left:284.3px;top:550px;font-size:17.28px;line-height:20px;color:#586066;font-weight:bold;">Titre</span>
<span class="t " style="left:614.7px;top:549px;font-size:19.2px;line-height:21px;">Chalcopyrite</span>
<div class="b" style="left:271px;top:579.3px;width:1140px;height:33.40000000000009px;background:#f2f2f2"></div>
<span class="t " style="left:277.3px;top:585px;font-size:19.2px;line-height:21px;color:#555e66;font-weight:bold;">LOCALISATION</span>
<span class="t " style="right:501.20000000000005px;top:587px;font-size:15px;line-height:17px;color:#b0b0b0;">^haut^</span>
<span class="t " style="left:283.3px;top:622px;font-size:17.28px;line-height:20px;color:#586066;font-weight:bold;">Emplacement de référence</span>
<span class="t " style="left:283.3px;top:718px;font-size:17.28px;line-height:20px;color:#586066;font-weight:bold;">Dernier récolement</span>
<span class="t " style="left:283.3px;top:798px;font-size:17.28px;line-height:20px;color:#586066;font-weight:bold;">Historique des récolements</span>
<div class="b" style="left:271px;top:835.3px;width:1140px;height:32.30000000000007px;background:#f2f2f2"></div>
<span class="t " style="left:277.3px;top:841px;font-size:19.2px;line-height:21px;color:#555e66;font-weight:bold;">MATÉRIELS &amp; COLIS</span>
<span class="t " style="left:614.7px;top:624px;font-size:19.2px;line-height:21px;">Bâtiment : Musée Flora <svg class="sm" viewBox="0 0 15 15"><g fill="none" stroke="currentColor" stroke-width="2" stroke-linecap="round" stroke-linejoin="round"><circle cx="6.300" cy="6.300" r="5.100"/><path d="M10.200 10.200l3.900 3.900"/></g></svg>/&nbsp; Bâtiment : Réserves <svg class="sm" viewBox="0 0 15 15"><g fill="none" stroke="currentColor" stroke-width="2" stroke-linecap="round" stroke-linejoin="round"><circle cx="6.300" cy="6.300" r="5.100"/><path d="M10.200 10.200l3.900 3.900"/></g></svg>/</span>
<span class="t " style="left:614.7px;top:655px;font-size:19.2px;line-height:21px;">Salle : E - Réserve Sciences naturelles <svg class="sm" viewBox="0 0 15 15"><g fill="none" stroke="currentColor" stroke-width="2" stroke-linecap="round" stroke-linejoin="round"><circle cx="6.300" cy="6.300" r="5.100"/><path d="M10.200 10.200l3.900 3.900"/></g></svg>/&nbsp; Mobilier : Travée E-03 <svg class="sm" viewBox="0 0 15 15"><g fill="none" stroke="currentColor" stroke-width="2" stroke-linecap="round" stroke-linejoin="round"><circle cx="6.300" cy="6.300" r="5.100"/><path d="M10.200 10.200l3.900 3.900"/></g></svg>/</span>
<span class="t " style="left:614.7px;top:686px;font-size:19.2px;line-height:21px;">Mobilier : Module E-03-C <svg class="sm" viewBox="0 0 15 15"><g fill="none" stroke="currentColor" stroke-width="2" stroke-linecap="round" stroke-linejoin="round"><circle cx="6.300" cy="6.300" r="5.100"/><path d="M10.200 10.200l3.900 3.900"/></g></svg>/&nbsp; Niveau de rangement : <span style="color:#4a78ff">Rayon E-03-C-02</span> <svg class="sm" viewBox="0 0 15 15"><g fill="none" stroke="currentColor" stroke-width="2" stroke-linecap="round" stroke-linejoin="round"><circle cx="6.300" cy="6.300" r="5.100"/><path d="M10.200 10.200l3.900 3.900"/></g></svg></span>
<span class="t " style="left:614.7px;top:715px;font-size:19.2px;line-height:21px;">Récolé sur pièce et sur place : le 24/05/2023 par <i>Administrateur, Flora</i>,</span>
<span class="t " style="left:614.7px;top:737px;font-size:19.2px;line-height:21px;"><b>De l'emplacement de référence :</b> Musée Decalog / Réserves / E - Réserve Sciences</span>
<span class="t " style="left:614.7px;top:764px;font-size:19.2px;line-height:21px;">naturelles / Travée E-03 / Module E-03-C / Rayon E-03-C-02</span>
<svg class="i" style="left:1155.8px;top:763.5px;width:24.00px;height:24.00px;" viewBox="0 0 24 24"><g fill="none" stroke="currentColor" stroke-width="2.6" stroke-linecap="round" stroke-linejoin="round"><circle cx="10.300" cy="10.300" r="8.600"/><path d="M16.600 16.600l6 6"/></g></svg>
<svg class="i" style="left:1190.5px;top:763.5px;width:24.00px;height:24.00px;" viewBox="0 0 24 24"><g fill="none" stroke="currentColor" stroke-width="2" stroke-linecap="round" stroke-linejoin="round"><path d="M7.500 22.800H3a2 2 0 0 1-2-2V3.200a2 2 0 0 1 2-2h18a2 2 0 0 1 2 2v17.600a2 2 0 0 1-2 2h-4.500"/><path d="M1.500 2h21v3.300h-21z" fill="currentColor" stroke-width=".8"/><path d="M12 23.200V11M7.300 15.200 12 10.500l4.700 4.700" stroke-width="2.400"/></g></svg>
<span class="t " style="left:614.7px;top:800px;font-size:19.2px;line-height:21px;">2 récolements (tous)</span>
<svg class="i" style="left:800.3px;top:800px;width:24.00px;height:24.00px;" viewBox="0 0 24 24"><g fill="none" stroke="currentColor" stroke-width="2.6" stroke-linecap="round" stroke-linejoin="round"><circle cx="10.300" cy="10.300" r="8.600"/><path d="M16.600 16.600l6 6"/></g></svg>
<svg class="i" style="left:835.3px;top:800px;width:24.00px;height:24.00px;" viewBox="0 0 24 24"><g fill="none" stroke="currentColor" stroke-width="2" stroke-linecap="round" stroke-linejoin="round"><path d="M7.500 22.800H3a2 2 0 0 1-2-2V3.200a2 2 0 0 1 2-2h18a2 2 0 0 1 2 2v17.600a2 2 0 0 1-2 2h-4.500"/><path d="M1.500 2h21v3.300h-21z" fill="currentColor" stroke-width=".8"/><path d="M12 23.200V11M7.300 15.200 12 10.500l4.700 4.700" stroke-width="2.400"/></g></svg>
</main>
<aside>
<div class="b" style="left:1448px;top:418px;width:11px;height:73px;background:#c6c6c6;border-radius:6px 0 0 6px"></div>
<div class="b" style="left:1450.5px;top:450px;width:0;height:0;border-left:5px solid #fff;border-top:4px solid transparent;border-bottom:4px solid transparent"></div>
<div class="b" style="left:1459px;top:220px;width:460px;height:488px;background:#f4f4f4;border:1px solid #e6e6e6;border-radius:8px;box-sizing:border-box"></div>
<div class="b" style="left:1460px;top:221px;width:458px;height:21px;background:#ececec;border-radius:7px 0 0 0"></div>
<div class="b" style="left:1460px;top:230px;width:458px;height:1px;background:#e4e4e4"></div>
<div class="b" style="left:1460px;top:276px;width:458px;height:1px;background:#e0e0e0"></div>
<div class="b" style="left:1460px;top:673.5px;width:458px;height:24px;background:#f8f8f8;border-top:1px solid #efefef;box-sizing:border-box"></div>
<div class="b" style="left:1460px;top:697.5px;width:458px;height:9.5px;background:#ebebeb;border-radius:0 0 0 7px"></div>
<div class="b" style="left:1465px;top:242px;width:57px;height:24px;background:#8c8c8c"></div>
<span class="t " style="left:1466.6px;top:244px;font-size:17.28px;line-height:20px;color:#fff;">Photos</span>
<span class="t " style="left:1552px;top:244px;font-size:17.28px;line-height:20px;color:#7d7d7d;">Biblio</span>
<span class="t " style="left:1625.3px;top:244px;font-size:17.28px;line-height:20px;color:#7d7d7d;">Vidéo</span>
<span class="t " style="left:1700.2px;top:244px;font-size:17.28px;line-height:20px;color:#7d7d7d;">Documents</span>
<span class="t " style="left:1818.6px;top:244px;font-size:17.28px;line-height:20px;color:#7d7d7d;">Archives</span>
<div class="b" style="left:1535px;top:246px;width:2px;height:18px;background:#dcdcdc"></div>
<div class="b" style="left:1608.5px;top:246px;width:2px;height:18px;background:#dcdcdc"></div>
<div class="b" style="left:1683.5px;top:246px;width:2px;height:18px;background:#dcdcdc"></div>
<div class="b" style="left:1802.5px;top:246px;width:2px;height:18px;background:#dcdcdc"></div>
<span class="t " style="left:1483.3px;top:302px;font-size:23px;line-height:26px;color:#777;">Photo de consultation</span>
<div class="b" style="left:1478px;top:333px;width:394px;height:260px;border:1px solid #ccc;border-radius:5px;box-sizing:border-box"></div>
<div class="b" style="left:1483px;top:337px;width:36px;height:29px;background:#fff;border-radius:6px"></div>
<svg class="i" style="left:1488px;top:343.5px;width:29.72px;height:26.25px;" viewBox="0 0 28.3 25"><g fill="none" stroke="currentColor" stroke-width="3.2" stroke-linecap="round" stroke-linejoin="round"><path d="M13 19.800H3.400a1.800 1.800 0 0 1-1.800-1.800V3.400a1.800 1.800 0 0 1 1.800-1.800h6.400l3.500 4.200h9.900a1.800 1.800 0 0 1 1.800 1.800V10.500"/><g stroke-width="1.500"><rect x="16.500" y="13.200" width="11" height="11" rx="1.500" fill="#fff"/><circle cx="19.8" cy="16.5" r="0.9" fill="currentColor" stroke="none"/><path d="M17.200 23.300l4-4.300 2.500 2.500 1.500-1.500 2 2"/></g></g></svg>
<div class="b" style="left:1484px;top:377px;width:384px;height:188px;background:#f9f9f9;border:1px solid #d0d0d0;border-top-color:#5a5a5a;border-left-color:#6e6e6e;box-sizing:border-box"></div>
<div class="b" style="left:1484px;top:541px;width:384px;height:24px;background:#707070"></div>
<span class="t" style="left:1484px;width:384px;text-align:center;top:543px;font-size:17.28px;line-height:20px;color:#fff">minéralogie</span>
<svg class="i" style="left:1586px;top:397px;width:180.00px;height:120.00px;" viewBox="0 0 180 120"><defs><linearGradient id="flr" x1="0" y1="0" x2="0" y2="1"><stop offset="0" stop-color="#050404"/><stop offset=".60" stop-color="#0a0909"/><stop offset=".72" stop-color="#302e2e"/><stop offset=".86" stop-color="#545151"/><stop offset="1" stop-color="#666363"/></linearGradient><radialGradient id="vig" cx=".42" cy=".62" r=".8"><stop offset=".5" stop-color="#000" stop-opacity="0"/><stop offset="1" stop-color="#000" stop-opacity=".6"/></radialGradient><filter id="rough" x="-10%" y="-10%" width="120%" height="120%"><feTurbulence type="fractalNoise" baseFrequency=".13" numOctaves="3" seed="7" result="n"/><feDisplacementMap in="SourceGraphic" in2="n" scale="9" xChannelSelector="R" yChannelSelector="G" result="d"/><feGaussianBlur in="d" stdDeviation=".7" result="b"/><feTurbulence type="fractalNoise" baseFrequency=".35" numOctaves="2" seed="3" result="n2"/><feColorMatrix in="n2" type="matrix" values="0 0 0 0 0  0 0 0 0 0  0 0 0 0 0  1.600 0 0 0 -.55" result="m"/><feComposite in="m" in2="b" operator="in" result="sh"/><feFlood flood-color="#1c150b" result="f"/><feComposite in="f" in2="sh" operator="in" result="dk"/><feMerge><feMergeNode in="b"/><feMergeNode in="dk"/></feMerge></filter><filter id="bl2"><feGaussianBlur stdDeviation="2.500"/></filter><clipPath id="pc"><rect width="180" height="120"/></clipPath></defs><g clip-path="url(#pc)"><rect width="180" height="120" fill="url(#flr)"/><rect width="180" height="120" fill="url(#vig)"/><ellipse cx="83" cy="104" rx="56" ry="5" fill="#15130f" filter="url(#bl2)"/><g filter="url(#rough)"><polygon points="96.7,50.0 121.2,48.4 124.5,43.5 136.1,43.5 140.6,50.0 134.9,57.3 141.3,64.9 131.9,69.5 124.5,75.9 132.8,91.2 121.5,92.7 112.0,100.4 101.3,105.6 89.1,106.5 81.4,100.4 87.5,91.2 96.7,79.0 102.8,63.7" fill="#a5824f"/><polygon points="105.9,57.3 124.2,51.2 134.9,54.2 127.3,64.9 115.0,72.6 107.4,84.8 99.8,78.7" fill="#c39c60"/><polygon points="27.2,88.6 34.1,75.6 44.8,64.9 55.5,59.6 49.4,50.9 61.6,53.5 70.4,54.5 75.3,40.8 81.7,39.0 83.3,46.9 76.1,58.1 76.9,78.7 83.3,90.9 79.9,100.4 63.1,102.5 43.2,98.5 29.8,92.7" fill="#dcc185"/><polygon points="35.6,78.7 47.8,66.5 58.5,64.9 69.2,72.6 72.3,87.9 61.6,98.5 44.8,95.5" fill="#ecd69c"/><polygon points="72.0,51.9 81.4,45.1 90.6,39.0 96.7,40.5 103.6,50.0 100.5,64.9 96.0,78.7 89.8,89.7 83.3,90.9 79.9,78.7 75.3,69.5" fill="#7a6540"/><polygon points="75.3,57.3 87.5,51.2 96.7,57.3 95.2,72.6 89.1,86.3 81.4,78.7" fill="#2e271b"/></g><polygon points="91.8,17.6 96.7,15.6 119.9,46.9 110.8,48.4 97.0,31.6" fill="#aaa29a" filter="url(#bl2)" opacity=".0"/><g style="filter:blur(.5px)"><polygon points="91.8,17.6 96.7,15.6 119.9,46.9 110.8,48.4 97.0,31.6" fill="#8a847d" stroke="#cfc7be" stroke-width=".9"/><polyline points="95.2,18.8 105.9,37.4 114.7,46.9" fill="none" stroke="#4a4540" stroke-width="1.200"/></g></g></svg>
</aside>
</body></html>
